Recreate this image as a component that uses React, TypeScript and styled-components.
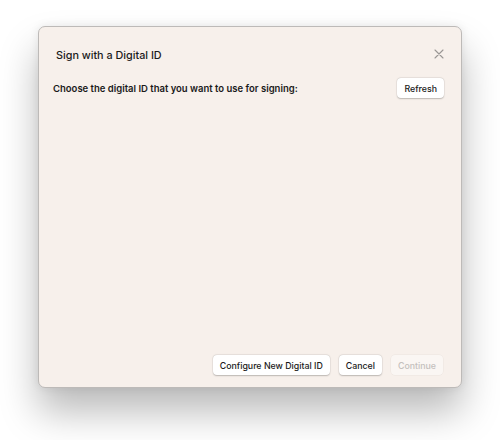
import React from "react";
import styled, { createGlobalStyle } from "styled-components";

const Global = createGlobalStyle`
  html, body { margin: 0; padding: 0; background: #ffffff; }
  body { font-family: Inter, "Noto Sans", sans-serif; -webkit-font-smoothing: antialiased; }
`;

const Page = styled.div`
  width: 500px;
  height: 440px;
  padding: 26px 0 0 38px;
  box-sizing: border-box;
`;

const Dialog = styled.div`
  width: 424px;
  height: 362px;
  box-sizing: border-box;
  background: #f7f0eb;
  border: 1px solid #bdbab8;
  border-radius: 7px;
  box-shadow: 0 24px 38px rgba(0, 0, 0, 0.27), 0 0 10px rgba(0, 0, 0, 0.08);
  display: flex;
  flex-direction: column;
  padding: 0 17px 12px 14px;
`;

const Header = styled.div`
  height: 51px;
  box-sizing: border-box;
  padding: 5px 0 0 3px;
  display: flex;
  align-items: center;
  justify-content: space-between;
`;

const Title = styled.h1`
  margin: 0;
  font-size: 10.8px;
  font-weight: 500;
  color: #1a1a1a;
`;

const Close = styled.button`
  border: none;
  background: none;
  padding: 0;
  width: 10px;
  height: 10px;
  display: flex;
  align-items: center;
  justify-content: center;
  margin-bottom: 2px;
  cursor: pointer;
`;

const Row = styled.div`
  display: flex;
  align-items: center;
  justify-content: space-between;
`;

const Prompt = styled.p`
  margin: 0;
  font-size: 9.5px;
  font-weight: 600;
  color: #1a1a1a;
`;

const Body = styled.div`
  flex: 1;
`;

const Footer = styled.div`
  display: flex;
  justify-content: flex-end;
  gap: 9px;
  padding-right: 1px;
`;

const Button = styled.button<{ $disabled?: boolean }>`
  height: 20px;
  padding: 0 7px;
  border: none;
  border-radius: 4px;
  background: ${(p) => (p.$disabled ? "#faf6f3" : "#ffffff")};
  box-shadow: ${(p) =>
    p.$disabled
      ? "0 0 0 0.5px rgba(0,0,0,0.05)"
      : "0 0.5px 1.5px rgba(0,0,0,0.22), 0 0 0 0.5px rgba(0,0,0,0.06)"};
  font-family: Inter, "Noto Sans", sans-serif;
  font-size: 8.8px;
  font-weight: 500;
  color: ${(p) => (p.$disabled ? "#c4c0bd" : "#1a1a1a")};
`;

export default function App() {
  return (
    <>
      <Global />
      <Page>
        <Dialog>
          <Header>
            <Title>Sign with a Digital ID</Title>
            <Close aria-label="Close">
              <svg width="10" height="10" viewBox="0 0 10 10">
                <path d="M1 1L9 9M9 1L1 9" stroke="#9a9694" strokeWidth="1.1" strokeLinecap="round" />
              </svg>
            </Close>
          </Header>
          <Row>
            <Prompt>Choose the digital ID that you want to use for signing:</Prompt>
            <Button>Refresh</Button>
          </Row>
          <Body />
          <Footer>
            <Button>Configure New Digital ID</Button>
            <Button>Cancel</Button>
            <Button $disabled>Continue</Button>
          </Footer>
        </Dialog>
      </Page>
    </>
  );
}
